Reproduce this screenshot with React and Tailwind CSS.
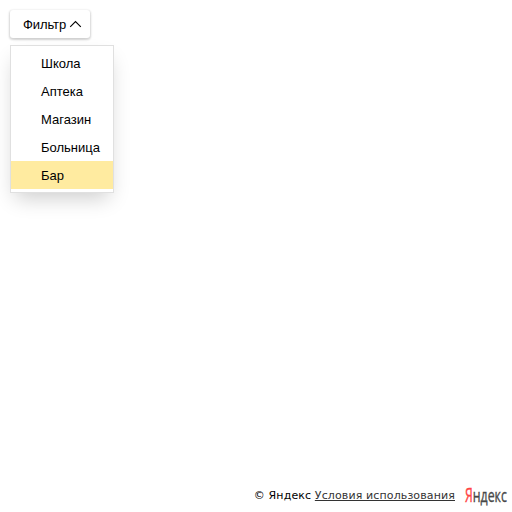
const items = ["Школа", "Аптека", "Магазин", "Больница", "Бар"];

function FilterButton() {
  return (
    <button
      type="button"
      className="flex h-7 w-20 items-center rounded-[3px] bg-white pl-[13px] text-[13px] leading-7 text-black shadow-[0_1px_2px_1px_rgba(0,0,0,0.15),0_2px_5px_-3px_rgba(0,0,0,0.15)]"
    >
      <span className="w-[46px] pt-[2px] text-left tracking-[-0.1px]">Фильтр</span>
      <svg width="13" height="8" viewBox="0 0 13 8" fill="none" className="shrink-0">
        <path d="M1.2 6.8 6.5 1.5l5.3 5.3" stroke="#000" strokeWidth="1.1" />
      </svg>
    </button>
  );
}

function FilterList() {
  return (
    <ul className="mt-[7px] w-[104px] border border-[#e0e0e0] bg-white py-[3px] shadow-[0_10px_20px_-5px_rgba(0,0,0,0.2)]">
      {items.map((name) => (
        <li
          key={name}
          className={
            name === "Бар"
              ? "h-7 bg-[#ffeba0] pl-[30px] pt-px leading-7"
              : "h-7 pl-[30px] pt-px leading-7"
          }
        >
          {name}
        </li>
      ))}
    </ul>
  );
}

function Copyright() {
  return (
    <footer className="mt-auto flex h-[33px] items-start justify-end pr-[4px] font-['DejaVu_Sans',sans-serif] text-[11px] leading-[14px]">
      <span className="mt-[10px] whitespace-nowrap tracking-[0.12px]">
        © Яндекс{" "}
        <a href="#" className="text-[#333] underline">
          Условия использования
        </a>
      </span>
      <span className="ml-[10px] mt-[6px] block h-5 w-[43px] origin-left scale-x-[0.685] whitespace-nowrap font-['Open_Sans',sans-serif] text-[18px] leading-5 text-[#484848] [-webkit-text-stroke:0.35px]">
        <span className="inline-block origin-[50%_75%] scale-y-[1.15] text-[#ff4444]">Я</span>ндекс
      </span>
    </footer>
  );
}

export default function App() {
  return (
    <div className="flex h-[512px] w-[512px] flex-col overflow-hidden bg-white font-['Liberation_Sans',Arial,sans-serif] text-[13px] text-black">
      <div className="pl-[10px] pt-[10px]">
        <FilterButton />
        <FilterList />
      </div>
      <Copyright />
    </div>
  );
}
